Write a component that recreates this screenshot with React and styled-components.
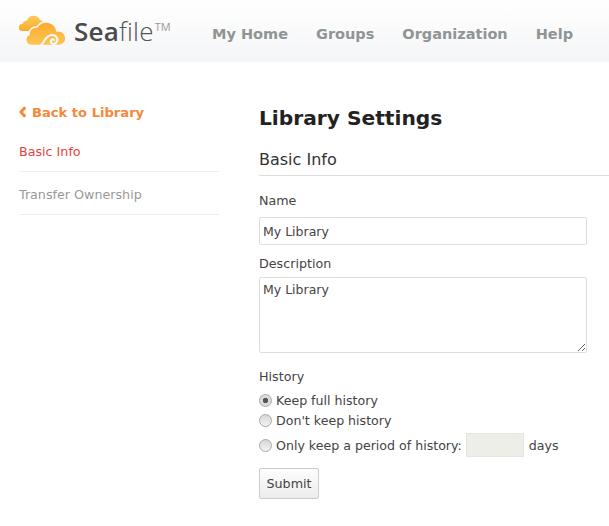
import React from 'react';
import styled, { createGlobalStyle } from 'styled-components';

const GlobalStyle = createGlobalStyle`
  html, body {
    margin: 0;
    padding: 0;
    background: #fff;
    overflow: hidden;
  }
  body {
    font-family: 'DejaVu Sans', sans-serif;
    font-size: 13px;
    color: #333;
  }
`;

const SeafileLogo = () => (
  <LogoIcon viewBox="0 0 50 34" aria-hidden="true">
    <defs>
      <linearGradient id="cloudBack" x1="0" y1="0" x2="0" y2="1">
        <stop offset="0" stopColor="#fdcb58" />
        <stop offset="1" stopColor="#f9ab2e" />
      </linearGradient>
      <linearGradient id="cloudFront" x1="0" y1="0" x2="0" y2="1">
        <stop offset="0" stopColor="#fba92c" />
        <stop offset="1" stopColor="#fdc756" />
      </linearGradient>
    </defs>
    <path
      fill="url(#cloudBack)"
      d="M3 17 A3.500 3.500 0 0 1 3.500 10 A5 5 0 0 1 8 6.500 A7 7 0 0 1 21 6 A5.500 5.500 0 0 1 25 9 L25 17 Z"
    />
    <path
      fill="url(#cloudFront)"
      stroke="#fafafb"
      strokeWidth="1.500"
      d="M13 31.500 A5.800 5.800 0 0 1 10 20.500 A7 7 0 0 1 18 13 A11 11 0 0 1 38 17 A7.300 7.300 0 0 1 41 31.500 Z"
    />
    <path
      fill="none"
      stroke="#fafafb"
      strokeWidth="2"
      strokeLinecap="round"
      d="M21 32 C25 30 26 21 33 21 C38 21 40 26 37 29 C35 31 31 29.500 32 26.500 C32.500 25 34.500 25 35 26"
    />
  </LogoIcon>
);

export default function App() {
  return (
    <>
      <GlobalStyle />
      <Header>
        <Logo href="#">
          <SeafileLogo />
          <LogoText>
            <strong>Sea</strong>file
          </LogoText>
          <Trademark>TM</Trademark>
        </Logo>
        <Nav>
          {navItems.map(item => (
            <NavLink href="#" key={item}>{item}</NavLink>
          ))}
        </Nav>
      </Header>
      <Page>
        <Sidebar>
          <BackLink href="#">
            <BackIcon viewBox="0 0 8 12" aria-hidden="true">
              <path d="M6.200 1.200 2 6l4.200 4.800" />
            </BackIcon>
            Back to Library
          </BackLink>
          <SideNav>
            <SideItem href="#" $active>Basic Info</SideItem>
            <SideItem href="#">Transfer Ownership</SideItem>
          </SideNav>
        </Sidebar>
        <Main>
          <Title>Library Settings</Title>
          <SectionTitle>Basic Info</SectionTitle>
          <Form onSubmit={e => e.preventDefault()}>
            <Label htmlFor="name">Name</Label>
            <TextInput id="name" type="text" defaultValue="My Library" />
            <Label htmlFor="desc">Description</Label>
            <TextArea id="desc" defaultValue="My Library" />
            <HistoryLabel>History</HistoryLabel>
            <RadioRow>
              <Radio type="radio" name="history" defaultChecked />
              Keep full history
            </RadioRow>
            <RadioRow>
              <Radio type="radio" name="history" />
              Don't keep history
            </RadioRow>
            <RadioRow $tall>
              <Radio type="radio" name="history" />
              Only keep a period of history:
              <DaysInput type="text" disabled />
              days
            </RadioRow>
            <SubmitButton type="submit">Submit</SubmitButton>
          </Form>
        </Main>
      </Page>
    </>
  );
}

const navItems = ['My Home', 'Groups', 'Organization', 'Help'];

const Header = styled.header`
  display: flex;
  align-items: center;
  height: 62px;
  padding-left: 19px;
  background: linear-gradient(to bottom, #ffffff, #f4f5f7);
`;

const Logo = styled.a`
  display: flex;
  align-items: flex-start;
  width: 193px;
  height: 34px;
  text-decoration: none;
`;

const LogoIcon = styled.svg`
  width: 50px;
  height: 34px;
  flex: none;
`;

const LogoText = styled.span`
  margin-left: 5px;
  font-family: 'Open Sans', sans-serif;
  font-size: 26px;
  line-height: 34px;
  color: #555;
  font-weight: 300;
  letter-spacing: 0.2px;

  strong {
    font-weight: 600;
    color: #4a4a4a;
  }
`;

const Trademark = styled.span`
  margin: 7px 0 0 1px;
  font-family: 'Open Sans', sans-serif;
  font-size: 11px;
  line-height: 12px;
  font-weight: 400;
  color: #999;
`;

const Nav = styled.nav`
  display: flex;
  gap: 28px;
  margin-top: 5px;
`;

const NavLink = styled.a`
  font-size: 14.500px;
  font-weight: 700;
  color: #8f9595;
  text-decoration: none;
`;

const Page = styled.div`
  display: flex;
  padding: 39px 0 0 19px;
`;

const Sidebar = styled.aside`
  flex: none;
  width: 200px;
  margin-right: 40px;
`;

const BackLink = styled.a`
  display: flex;
  align-items: center;
  gap: 5px;
  height: 22px;
  font-size: 13.100px;
  font-weight: 700;
  color: #f5883b;
  text-decoration: none;
`;

const BackIcon = styled.svg`
  width: 8px;
  height: 12px;
  fill: none;
  stroke: #f5883b;
  stroke-width: 3;
`;

const SideNav = styled.nav`
  display: flex;
  flex-direction: column;
  margin-top: 6px;
`;

const SideItem = styled.a`
  display: flex;
  align-items: center;
  box-sizing: border-box;
  height: 43px;
  padding-top: 2px;
  border-bottom: 1px solid #eeeeee;
  font-size: 12.700px;
  color: ${p => (p.$active ? '#e9423c' : '#999999')};
  text-decoration: none;
`;

const Main = styled.main`
  flex: 1;
  min-width: 0;
`;

const Title = styled.h2`
  margin: 0;
  font-size: 20.200px;
  line-height: 34px;
  font-weight: 700;
  color: #222;
`;

const SectionTitle = styled.h3`
  margin: 12px 0 0;
  height: 28px;
  border-bottom: 1px solid #dddddd;
  font-size: 16px;
  line-height: 26px;
  font-weight: 400;
  color: #333;
`;

const Form = styled.form`
  display: flex;
  flex-direction: column;
  align-items: flex-start;
  width: 328px;
  padding-top: 16px;
`;

const Label = styled.label`
  height: 17px;
  margin-bottom: 8px;
  font-size: 12.700px;
  line-height: 17px;
  color: #444;
`;

const fieldCss = `
  box-sizing: border-box;
  width: 328px;
  padding: 3px;
  border: 1px solid #dddddd;
  border-radius: 2px;
  background: #fff;
  font-family: 'DejaVu Sans', sans-serif;
  font-size: 12.500px;
  color: #444;
  outline: none;
`;

const TextInput = styled.input`
  ${fieldCss}
  height: 28px;
  margin-bottom: 10px;
`;

const TextArea = styled.textarea`
  ${fieldCss}
  display: block;
  height: 76px;
  margin: -3px 0 15px;
  padding-top: 4px;
  resize: vertical;
`;

const HistoryLabel = styled.div`
  height: 17px;
  margin-bottom: 5px;
  font-size: 12.700px;
  line-height: 17px;
  color: #444;
`;

const RadioRow = styled.label`
  display: flex;
  align-items: center;
  height: ${p => (p.$tall ? '24px' : '20px')};
  margin-top: ${p => (p.$tall ? '3px' : '0')};
  font-size: 12.600px;
  color: #444;
  white-space: nowrap;
`;

const Radio = styled.input`
  appearance: none;
  box-sizing: border-box;
  flex: none;
  width: 13px;
  height: 13px;
  margin: 0 4px 0 0;
  border: 1px solid #a8a8a8;
  border-radius: 50%;
  background: linear-gradient(to bottom, #d8d8d8, #f2f2f2);

  &:checked {
    background: radial-gradient(circle, #555 0 2.500px, #dcdcdc 3px);
  }
`;

const DaysInput = styled.input`
  box-sizing: border-box;
  width: 58px;
  height: 24px;
  margin: 0 5px 0 4px;
  padding: 0;
  border: 1px solid #e6e6e0;
  background: #eeeee8;
`;

const SubmitButton = styled.button`
  box-sizing: border-box;
  width: 60px;
  height: 31px;
  margin-top: 11px;
  padding: 0;
  border: 1px solid #cccccc;
  border-radius: 2px;
  background: linear-gradient(to bottom, #fdfdfd, #ececec);
  font-family: 'DejaVu Sans', sans-serif;
  font-size: 12.700px;
  color: #444;
`;
